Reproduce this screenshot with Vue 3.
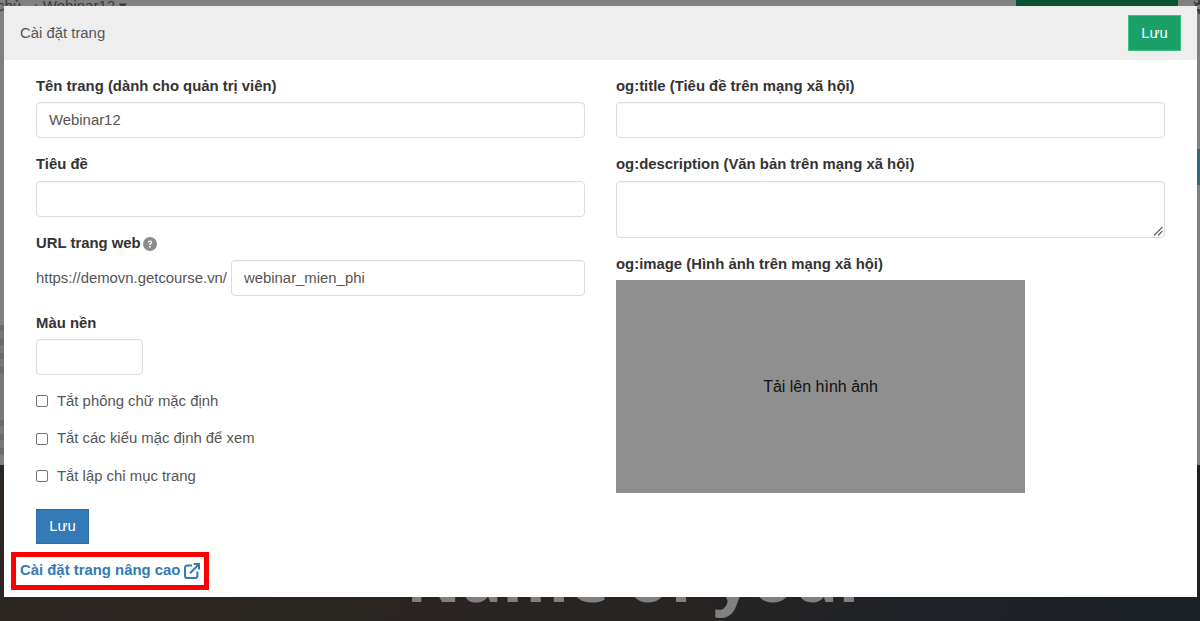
<script setup>
const checks = ['Tắt phông chữ mặc định', 'Tắt các kiểu mặc định để xem', 'Tắt lập chỉ mục trang']
</script>

<template>
  <div class="page">
    <div class="backdrop-top">
      <span class="crumb">chủ &nbsp; › Webinar12 ▾</span>
      <span class="top-btn"></span>
      <svg class="gear" viewBox="0 0 14 14" width="14" height="14">
        <circle cx="7" cy="7" r="3.4" fill="none" stroke="#333" stroke-width="2" />
        <path d="M7 0v3M7 11v3M0 7h3M11 7h3M2 2l2 2M10 10l2 2M12 2l-2 2M4 10l-2 2" stroke="#333" stroke-width="1.6" />
      </svg>
      <span class="teal"></span>
      <span class="texture"></span>
    </div>
    <div class="backdrop-bottom">
      <span class="hero">Name of your</span>
    </div>

    <section class="modal">
      <header class="head">
        <span class="title">Cài đặt trang</span>
        <button class="btn green">Lưu</button>
      </header>
      <div class="body">
        <div class="col left">
          <label class="lab l1">Tên trang (dành cho quản trị viên)</label>
          <div class="input">Webinar12</div>
          <label class="lab l2">Tiêu đề</label>
          <div class="input"></div>
          <label class="lab l2 with-icon">URL trang web
            <svg class="help" viewBox="0 0 14 14" width="14" height="14">
              <circle cx="7" cy="7" r="7" fill="#8c8c8c" />
              <path d="M4.8 5.4C4.9 4.1 5.8 3.4 7.1 3.4c1.3 0 2.2.8 2.2 1.9 0 .9-.5 1.3-1.1 1.7-.5.3-.6.5-.6 1.1H6.2c0-1 .2-1.4.9-1.9.5-.3.8-.5.8-.9s-.3-.7-.8-.7-.8.3-.9.9z" fill="#fff" />
              <rect x="6.2" y="9" width="1.5" height="1.6" fill="#fff" />
            </svg>
          </label>
          <div class="url-row">
            <span class="prefix">https://demovn.getcourse.vn/</span>
            <div class="input grow">webinar_mien_phi</div>
          </div>
          <label class="lab l3">Màu nền</label>
          <div class="input color"></div>
          <div class="checks">
            <div v-for="c in checks" :key="c" class="check">
              <span class="box"></span>
              <span>{{ c }}</span>
            </div>
          </div>
          <button class="btn blue">Lưu</button>
        </div>
        <div class="col right">
          <label class="lab l1">og:title (Tiêu đề trên mạng xã hội)</label>
          <div class="input"></div>
          <label class="lab l2">og:description (Văn bản trên mạng xã hội)</label>
          <div class="input area">
            <svg class="grip" viewBox="0 0 10 10" width="10" height="10">
              <path d="M1 9.5 9.5 1M5 9.5 9.5 5" stroke="#666" stroke-width="1.2" fill="none" />
            </svg>
          </div>
          <label class="lab l4">og:image (Hình ảnh trên mạng xã hội)</label>
          <div class="upload">Tải lên hình ảnh</div>
        </div>
      </div>
      <a class="adv">
        <span class="adv-text">Cài đặt trang nâng cao</span>
        <svg viewBox="0 0 16 16" width="16" height="16" fill="none" stroke="#337ab7" stroke-width="2">
          <path d="M8 2.6H3A2 2 0 0 0 1 4.6V13a2 2 0 0 0 2 2h8.4a2 2 0 0 0 2-2V8.5" />
          <path d="M6 10.2 14.4 1.7" />
          <path d="M9.6 1h5.4v5.4" />
        </svg>
      </a>
    </section>
  </div>
</template>

<style>
html, body { margin: 0; background: #7f7f7f; overflow: hidden; }
</style>

<style scoped>
.page {
  position: relative;
  width: 1200px;
  height: 621px;
  overflow: hidden;
  display: flex;
  flex-direction: column;
  font-family: "Liberation Sans", Arial, sans-serif;
  font-size: 14.88px;
  color: #555;
}
.backdrop-top { flex: 0 0 465px; background: #808080; position: relative; }
.backdrop-bottom {
  flex: 1;
  position: relative;
  background: linear-gradient(90deg, #2b2622 0%, #282421 55%, #1f2226 75%, #1c2126 100%);
}
.crumb {
  position: absolute;
  left: -3px;
  top: -3px;
  font-size: 15px;
  color: #3a3a3a;
  white-space: nowrap;
}
.top-btn {
  position: absolute;
  left: 1016px;
  top: 0;
  width: 162px;
  height: 6px;
  background: #0b5233;
}
.gear { position: absolute; left: 1192px; top: 0; }
.teal {
  position: absolute;
  left: 1197px;
  top: 149px;
  width: 3px;
  height: 36px;
  background: #2f6a78;
}
.texture {
  position: absolute;
  left: 0;
  top: 325px;
  width: 4px;
  height: 130px;
  background:
    repeating-linear-gradient(180deg, #6b6b6b 0 6px, #787878 6px 14px) 0 0 / 4px 48px no-repeat,
    repeating-linear-gradient(180deg, #6b6b6b 0 6px, #787878 6px 14px) 0 95px / 4px 35px no-repeat,
    #797979;
}
.hero {
  position: absolute;
  left: 406px;
  top: 75px;
  font: bold 68px/72px "Open Sans", sans-serif;
  color: #808080;
  white-space: nowrap;
}
.modal {
  position: absolute;
  left: 4px;
  top: 6px;
  width: 1193px;
  height: 591px;
  background: #fff;
}
.head {
  height: 54px;
  box-sizing: border-box;
  background: #eeeeee;
  display: flex;
  align-items: center;
  justify-content: space-between;
  padding: 0 16px;
}
.title { font-size: 14.88px; color: #555; margin-bottom: 1px; }
.btn {
  font-family: inherit;
  font-size: 14.88px;
  color: #fff;
  border: 1px solid;
  border-radius: 0;
  padding: 0;
  width: 53px;
  height: 35px;
}
.green { background: #1ba06a; border-color: #3fbf7f; height: 36px; }
.blue { background: #337ab7; border-color: #2e6da4; margin-top: 24px; display: block; }
.body {
  display: grid;
  grid-template-columns: 549px 549px;
  column-gap: 31px;
  padding: 0 32px;
}
.col { display: flex; flex-direction: column; align-items: stretch; }
.col .btn { align-self: flex-start; }
.lab {
  display: block;
  font-weight: bold;
  color: #333;
  font-size: 14.88px;
  line-height: 17px;
  margin-bottom: 7px;
}
.l1 { margin-top: 18px; }
.l2 { margin-top: 18px; margin-bottom: 8px; }
.l3 { margin-top: 19px; margin-bottom: 7px; }
.l4 { margin-top: 18px; margin-bottom: 7px; }
.with-icon { display: flex; align-items: center; gap: 2px; }
.help { flex: none; }
.input {
  box-sizing: border-box;
  height: 36px;
  border: 1px solid #dddddd;
  border-radius: 4px;
  padding: 0 12px;
  line-height: 34px;
  background: #fff;
  box-shadow: inset 0 1px 1px rgba(0, 0, 0, .04);
  color: #555;
}
.area { height: 57px; position: relative; }
.grip { position: absolute; right: 1px; bottom: 1px; }
.url-row { display: flex; align-items: center; gap: 4px; }
.prefix { color: #555; }
.grow { flex: 1; }
.color { width: 107px; }
.checks { display: flex; flex-direction: column; gap: 20px; margin-top: 17px; }
.check { display: flex; align-items: center; gap: 9px; height: 17.5px; }
.box {
  box-sizing: border-box;
  width: 12px;
  height: 12px;
  margin-top: 1px;
  border: 1px solid #767676;
  border-radius: 2px;
  background: #fff;
}
.upload {
  width: 409px;
  height: 213px;
  background: #8f8f8f;
  color: #111;
  font-size: 16px;
  display: flex;
  align-items: center;
  justify-content: center;
}
.adv {
  position: absolute;
  left: 7px;
  top: 546px;
  width: 198px;
  height: 38px;
  box-sizing: border-box;
  border: 5px solid #fa0000;
  padding-left: 4px;
  display: flex;
  align-items: center;
  gap: 4px;
  color: #337ab7;
  font-weight: bold;
  font-size: 14.88px;
  white-space: nowrap;
}
.adv-text { margin-bottom: 2px; }
</style>
